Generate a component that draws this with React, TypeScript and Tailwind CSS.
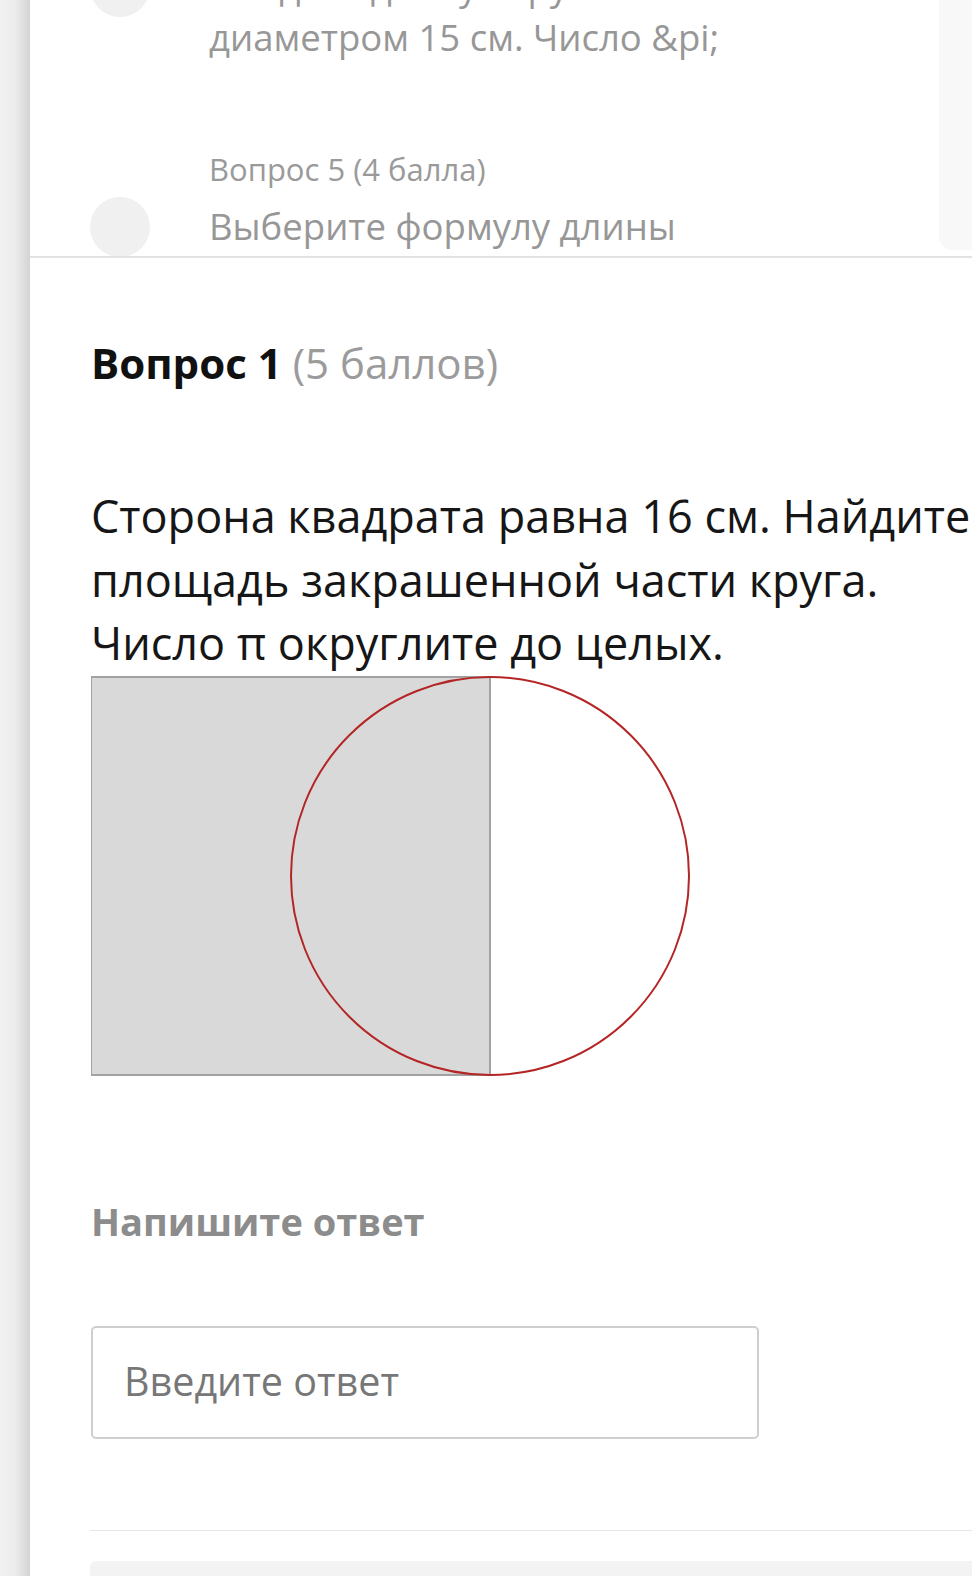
import React from "react";

const font = { fontFamily: '"Open Sans", "Noto Sans", sans-serif' };

export default function App() {
  return (
    <div className="w-[972px] h-[1576px] overflow-hidden bg-white flex" style={font}>
      <div className="w-[30px] shrink-0 bg-gradient-to-r from-[#f1f1f1] via-[#ececec] to-[#d3d3d3]" />
      <div className="flex-1 flex flex-col min-w-0">
        {/* top panel (scrolled list) */}
        <div className="h-[258px] shrink-0 flex border-b-2 border-[#e2e2e2] overflow-hidden">
          <div className="flex-1 overflow-hidden">
            <div className="mt-[-39px] pl-[60px]">
              <div className="flex items-start">
                <div className="h-[51px] flex items-center">
                  <div className="w-[60px] h-[60px] rounded-full bg-[#f0f0f0] shrink-0" />
                </div>
                <div className="ml-[59px] text-[36.5px] leading-[51px] text-[#979797] whitespace-nowrap">
                  <div>Найдите длину окружности с</div>
                  <div>диаметром 15 см. Число &amp;pi;</div>
                </div>
              </div>
              <div className="mt-[86px] pl-[119px] text-[31px] leading-[40px] text-[#9a9a9a] whitespace-nowrap">
                Вопрос 5 (4 балла)
              </div>
              <div className="mt-[12px] flex items-start">
                <div className="h-[51px] flex items-center">
                  <div className="w-[60px] h-[60px] rounded-full bg-[#f0f0f0] shrink-0" />
                </div>
                <div className="ml-[59px] text-[36.5px] leading-[51px] text-[#979797] whitespace-nowrap">
                  Выберите формулу длины
                </div>
              </div>
            </div>
          </div>
          <div className="w-[33px] shrink-0 h-[250px] bg-[#f8f8f8] rounded-bl-[14px]" />
        </div>

        {/* question */}
        <div className="pl-[61px]">
          <div className="mt-[79px] text-[42px] leading-[52px] whitespace-nowrap">
            <span className="font-bold text-[#111]">Вопрос 1</span>{" "}
            <span className="text-[#9b9b9b]">(5 баллов)</span>
          </div>
          <div className="mt-[95px] text-[45px] leading-[63.5px] text-[#161616] whitespace-nowrap">
            <div>Сторона квадрата равна 16 см. Найдите</div>
            <div>площадь закрашенной части круга.</div>
            <div>Число π округлите до целых.</div>
          </div>
          <svg width="602" height="402" viewBox="0 0 602 402" className="mt-[1px] block">
            <rect x="0" y="1" width="399" height="398" fill="#d9d9d9" stroke="#a2a2a2" strokeWidth="2" />
            <circle cx="399" cy="200" r="199" fill="none" stroke="#b42525" strokeWidth="2" />
          </svg>
          <div className="mt-[120px] text-[38px] leading-[46px] font-bold text-[#8c8c8c] whitespace-nowrap">
            Напишите ответ
          </div>
          <div className="mt-[82px] w-[668px] h-[113px] border-2 border-[#cfcfcf] rounded-[5px] flex items-center pl-[31px]">
            <span className="text-[39.5px] text-[#777] whitespace-nowrap">Введите ответ</span>
          </div>
        </div>
        <div className="ml-[60px] mt-[91px] h-[2px] bg-[#e6e6e6]" />
        <div className="ml-[60px] mt-[31px] h-[40px] bg-[#f3f3f3] rounded-tl-[6px]" />
      </div>
    </div>
  );
}
